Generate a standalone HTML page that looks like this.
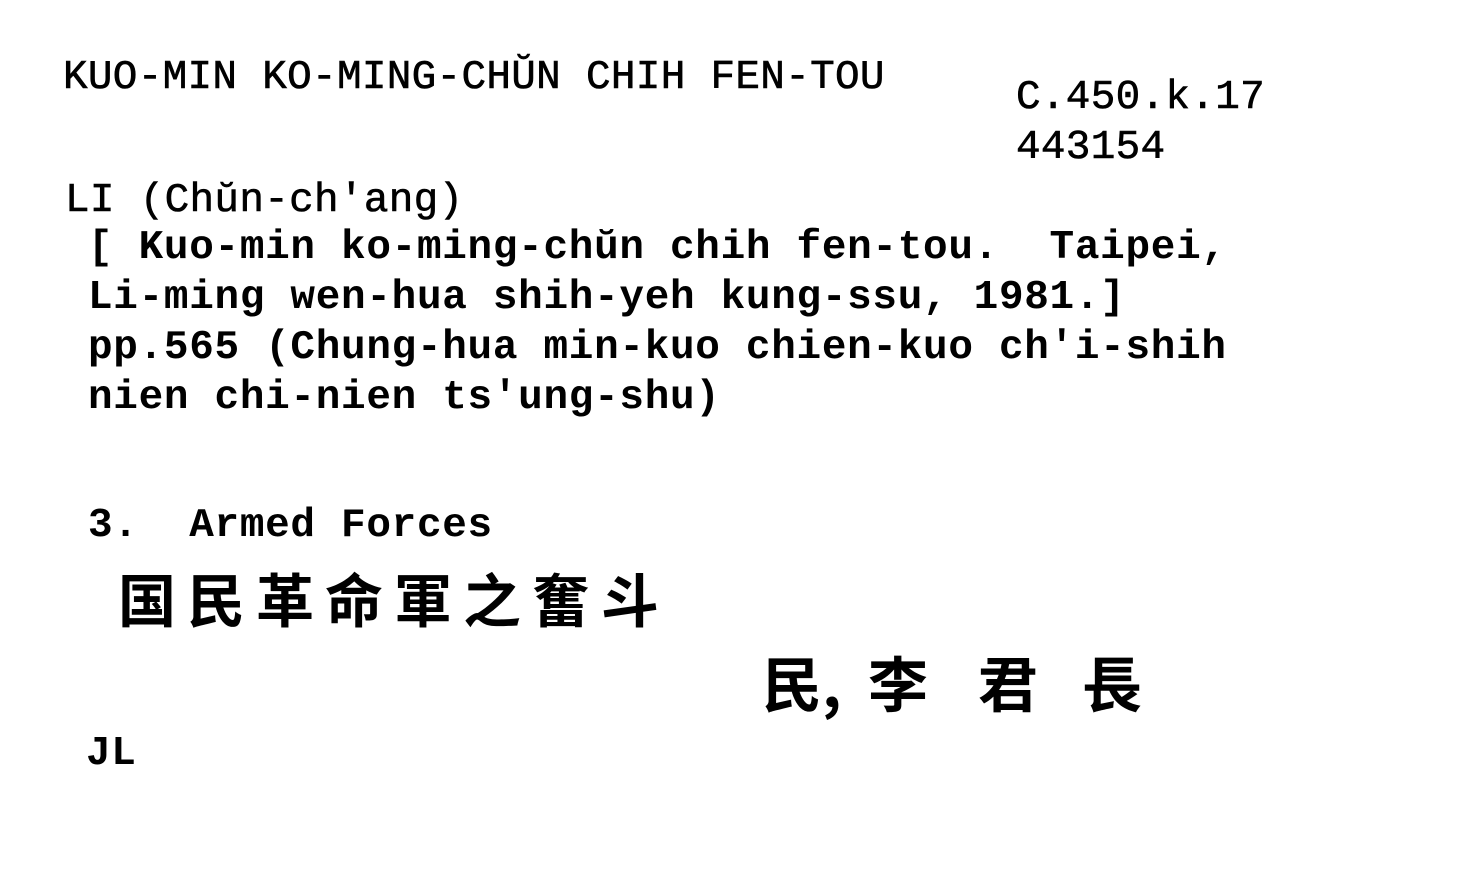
<!DOCTYPE html>
<html><head><meta charset="utf-8"><style>
html,body{margin:0;padding:0;background:#fff;}
body{width:1480px;height:887px;position:relative;overflow:hidden;}
.t{position:absolute;font-family:"Liberation Mono",monospace;font-size:41px;line-height:1;color:#000;white-space:pre;letter-spacing:0.3px;-webkit-text-stroke:0.6px #000;}
.b{font-weight:bold;letter-spacing:0.7px;-webkit-text-stroke:0;}
.c{position:absolute;font-family:"Noto Sans CJK SC","Noto Serif CJK SC",sans-serif;font-weight:bold;color:#000;line-height:1;white-space:pre;}
</style></head><body>
<div class="t" style="left:63px;top:58px;">KUO-MIN KO-MING-CHŬN CHIH FEN-TOU</div>
<div class="t" style="left:1016px;top:78px;">C.450.k.17</div>
<div class="t" style="left:1016px;top:128px;">443154</div>
<div class="t" style="left:65px;top:181px;">LI (Chŭn-ch'ang)</div>
<div class="t b" style="left:88px;top:228px;">[ Kuo-min ko-ming-chŭn chih fen-tou.  Taipei,</div>
<div class="t b" style="left:88px;top:278px;">Li-ming wen-hua shih-yeh kung-ssu, 1981.]</div>
<div class="t b" style="left:88px;top:328px;">pp.565 (Chung-hua min-kuo chien-kuo ch'i-shih</div>
<div class="t b" style="left:88px;top:378px;">nien chi-nien ts'ung-shu)</div>
<div class="t b" style="left:88px;top:506px;">3.  Armed Forces</div>
<div class="c" style="left:118px;top:568px;font-size:58px;letter-spacing:11px;">国民革命軍之奮斗</div>
<div class="c" style="left:762px;top:652px;font-size:60px;">民,</div>
<div class="c" style="left:868px;top:652px;font-size:60px;">李</div>
<div class="c" style="left:978px;top:652px;font-size:60px;">君</div>
<div class="c" style="left:1082px;top:652px;font-size:60px;">長</div>
<div class="t b" style="left:86px;top:734px;">JL</div>
</body></html>
